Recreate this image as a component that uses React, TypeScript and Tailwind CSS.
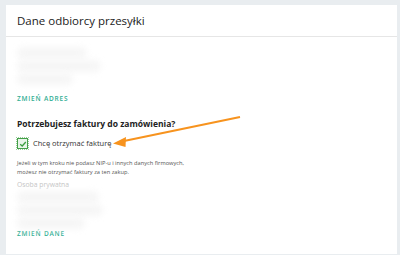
import React from "react";

// blurred stand-in for the hidden address / name lines
function HiddenBlock({ widths }: { widths: number[] }) {
  return (
    <div className="flex h-[38px] flex-col justify-center gap-[1px]">
      {widths.map((w, i) => (
        <div
          key={i}
          className="h-[12px] rounded-full bg-[#f6f6f6] blur-[3px]"
          style={{ width: w }}
        />
      ))}
    </div>
  );
}

function LinkLabel({ children }: { children: React.ReactNode }) {
  return (
    <div className="text-[6.5px] font-semibold uppercase tracking-[0.8px] text-[#2fae93] leading-none">
      {children}
    </div>
  );
}

export default function App() {
  return (
    <div className="h-[255px] w-[400px] bg-[#e9edf0] pl-[6px] pr-[3px] pt-[5px] font-['Open_Sans',sans-serif]">
      <div className="relative h-[249px] bg-white">
        <div className="flex h-[32px] items-center border-b border-[#e6e6e6] px-[11px]">
          <h1 className="text-[11.5px] text-[#222]">Dane odbiorcy przesyłki</h1>
        </div>

        <div className="flex flex-col items-start px-[11px] pt-[10px]">
          <HiddenBlock widths={[70, 84, 56]} />
          <div className="mt-[11px]">
            <LinkLabel>Zmień adres</LinkLabel>
          </div>

          <h2 className="mt-[17px] text-[8.5px] font-bold leading-none text-[#222]">
            Potrzebujesz faktury do zamówienia?
          </h2>

          <label className="mt-[10px] flex items-center gap-[5px]">
            <span className="flex h-[11px] w-[11px] items-center justify-center border border-[#43a047] bg-[#e8f5e9] outline-1 outline-dotted outline-offset-0 outline-[#9ccc9e]">
              <svg viewBox="0 0 10 10" className="h-[8px] w-[8px]">
                <path d="M1.5 5.2 L4 7.5 L8.5 2.5" fill="none" stroke="#3a9d3f" strokeWidth="1.6" />
              </svg>
            </span>
            <span className="text-[7.5px] leading-none text-[#333]">Chcę otrzymać fakturę</span>
          </label>

          <p className="mt-[10px] text-[5.7px] leading-[9px] text-[#555]">
            Jeżeli w tym kroku nie podasz NIP-u i innych danych firmowych,
            <br />
            możesz nie otrzymać faktury za ten zakup.
          </p>

          <div className="mt-[5px] text-[6.8px] leading-none text-[#c4c4c4]">Osoba prywatna</div>

          <div className="mt-[2px]">
            <HiddenBlock widths={[82, 86, 68]} />
          </div>
          <div className="mt-[2px]">
            <LinkLabel>Zmień dane</LinkLabel>
          </div>
        </div>

        <svg className="pointer-events-none absolute left-0 top-0" width="394" height="249">
          <line x1="234" y1="112" x2="118" y2="136" stroke="#f7931e" strokeWidth="2" />
          <path d="M107 138.5 L120 132 L119.5 142 Z" fill="#f7931e" />
        </svg>
      </div>
    </div>
  );
}
